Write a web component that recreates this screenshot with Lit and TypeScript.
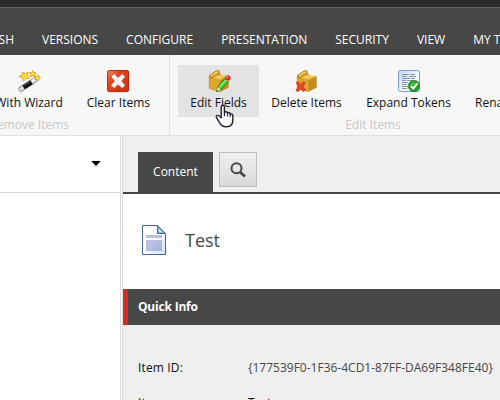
import { LitElement, html, svg, css } from "lit";
import { customElement } from "lit/decorators.js";

const wand = html`<svg viewBox="0 0 24 24" width="24" height="24">
  <path d="M4 20 18 11" stroke="#888" stroke-width="5.2" stroke-linecap="round"/>
  <path d="M4 20 18 11" stroke="#dcdcdc" stroke-width="3.8" stroke-linecap="round"/>
  <path d="M6.5 18.4 14.5 13.2" stroke="#111" stroke-width="4.6"/>
  <path d="M6.2 17 13.5 12.4" stroke="#666" stroke-width="1"/>
  <path d="M17.5 10.2 15 12" stroke="#fff" stroke-width="2"/>
  <g fill="#fbdc3c" stroke="#c99a10" stroke-width=".7" stroke-linejoin="round">
    <path d="M5 3.2 8 4.6 11.2 3.2 10.5 6.6 12.3 9.4 9 9.6 6.4 12.2 5.3 8.8 2.2 7.4 5 6z"/>
    <path d="M15.5 1.6 16.5 3.6 19 3.7 17.4 5.5 17.8 7.8 15.6 6.9 13.3 7.9 13.7 5.4 12.3 3.8 14.6 3.5z"/>
    <path d="M21.2 5.8 22 7.6 23.7 8.6 22.1 9.7 21.8 11.6 20 10.4 17.9 10.8 18.7 8.8 17.9 7.1 20 7.2z"/>
  </g></svg>`;

const clear = html`<svg viewBox="0 0 24 24" width="24" height="24">
  <defs><linearGradient id="r" x2="1" y2="1"><stop stop-color="#f48b68"/><stop offset=".35" stop-color="#e8401c"/><stop offset="1" stop-color="#d42a04"/></linearGradient></defs>
  <rect x="1.6" y="1.6" width="21" height="21" rx="1.5" fill="url(#r)" stroke="#b02408"/>
  <path d="M8.2 4.6 12.1 8.4 16.2 4.6 19.4 7.8 15.8 12 19.4 16.2 16.2 19.5 12.1 15.8 8 19.5 4.8 16.2 8.4 12 4.8 7.8z" fill="#f4f1f0" stroke="#a93a20" stroke-width=".6"/>
</svg>`;

const box = svg`
  <path d="M2.3 8.2 13 11.2 13.2 22.5 4 20.2Q2.2 19.6 2.2 18z" fill="#e2a62a"/>
  <path d="M13 11.2 21.3 7.4V18.4L13.2 22.6z" fill="#c48c1a"/>
  <path d="M2.3 8.2 11.2 4.6 21.3 7.4 13 11.2z" fill="#f1c95b"/>
  <path d="M2.6 6.2 9.6 1.6 12 2 13 6 11.3 5.2 4.5 9.2 2.4 8.4z" fill="#dba32c" stroke="#a66f0e" stroke-width=".7"/>
  <path d="M4 6.6 10.5 2.7" stroke="#f9df8e" stroke-width="1.1"/>
  <path d="M2.3 8.2 13 11.2 21.3 7.4V18.4L13.2 22.6 4 20.2Q2.2 19.6 2.2 18z" fill="none" stroke="#ba8118" stroke-width=".6"/>`;

const editBox = html`<svg viewBox="0 0 24 24" width="24" height="24">${box}
  <path d="M9.6 22.6 10.8 17.4 18.5 8.9 22 12.2 14.1 20.7z" fill="#42c92f" stroke="#16831a" stroke-width=".8"/>
  <path d="M12.4 18.4 19.6 10.4" stroke="#a2f288" stroke-width="1.3"/>
  <path d="M9.6 22.6 10.7 18.3 13.7 21z" fill="#eee2ce"/><path d="M9.6 22.6 10 20.9 11.3 22.1z" fill="#222"/>
  <path d="M17.6 9.6 19 8.2 22.3 11.2 20.9 12.8z" fill="#d5dbe2"/>
  <circle cx="20.8" cy="9" r="2.8" fill="#df3026"/><circle cx="20.2" cy="8" r="1" fill="#f59586"/></svg>`;

const deleteBox = html`<svg viewBox="0 0 24 24" width="24" height="24">${box}
  <path d="M1.2 13.6 3.3 12.8 5.7 15.4 8.3 12.8 10.2 13.8 8 17.5 10.3 21 8.2 22.7 5.6 19.8 3 22.7 .9 21.3 3.4 17.5z" fill="#ed4426" stroke="#b92a12" stroke-width=".7"/></svg>`;

const tokens = html`<svg viewBox="0 0 24 24" width="24" height="24">
  <defs><linearGradient id="t" x2="1" y2="1"><stop stop-color="#bcd8fa"/><stop offset=".6" stop-color="#f5f9fe"/><stop offset="1" stop-color="#d5e5f8"/></linearGradient></defs>
  <rect x="1.5" y="1.5" width="21" height="21" rx="2" fill="url(#t)" stroke="#7c9cd4"/>
  <path d="M5 5.5h7m1 0h5M5 7.5h5m2 0h7M5 9.5h8m1 0h4M5 11.5h4m1 0h5M5 13.5h6M5 15.5h5M5 17.5h6M5 19.5h5" stroke="#8b939e"/>
  <circle cx="17" cy="17" r="5.7" fill="#219c1e" stroke="#10780f" stroke-width=".6"/>
  <path d="M12.5 15.5a5 4 0 0 1 9 0q-4 2-9 0" fill="#66c85c" opacity=".6"/>
  <path d="M13.8 17 16.2 19.5 20.7 14.4" fill="none" stroke="#fff" stroke-width="2"/></svg>`;

const blank = html`<svg viewBox="0 0 24 24" width="24" height="24"></svg>`;

const pageIcon = html`<svg viewBox="0 0 24 30" width="24" height="30">
  <defs><linearGradient id="d" x2="1" y2="1"><stop stop-color="#fff"/><stop offset=".5" stop-color="#fbfdff"/><stop offset="1" stop-color="#cce2f8"/></linearGradient>
  <linearGradient id="b" x2="1" y2="1"><stop stop-color="#aebfe2"/><stop offset=".35" stop-color="#bfc0df"/><stop offset="1" stop-color="#9fb5df"/></linearGradient></defs>
  <path d="M.5.5H15.5L23.5 8.5V29.5H.5z" fill="url(#d)" stroke="#46659b"/>
  <path d="M15.5.8V8.5H23.2z" fill="#8bbbe0" stroke="#46659b"/><path d="M17 4V7H20z" fill="#d9effb"/>
  <path d="M4 10h16v3H4zM4 15h16v11H4z" fill="url(#b)"/></svg>`;

const hand = html`<svg viewBox="0 0 19 24" width="19" height="24">
  <path d="M6.2 14V3.1Q6.3 1.3 7.8 1.3T9.4 3.1V8.2Q11.7 6.9 12.5 8.9 14.6 8 15.3 10 17.8 9.5 17.8 12.1V16.5Q17.6 22.7 11.2 22.7 7 22.7 5 19.4L1.5 13.7Q.8 12 2.4 11.4 4 11.1 6.2 14" fill="#fff" stroke="#20202c" stroke-width="1.4" stroke-linejoin="round"/>
  <path d="M9.4 8v4.2M12.5 8.9v3.6M15.3 10v3" stroke="#20202c" stroke-width="1.2"/></svg>`;

@customElement("app-root")
class AppRoot extends LitElement {
  static styles = css`
    :host { display: flex; flex-direction: column; width: 500px; height: 400px; overflow: hidden; position: relative; background: #fff; color: #111; font: 12px/16px "Open Sans", sans-serif; white-space: nowrap; }
    * { box-sizing: border-box; }
    svg { display: block; flex: none; }
    .top { height: 8px; flex: none; background: #2b2b2b; border-bottom: 1px solid #626262; }
    .nav { height: 47px; flex: none; background: #474747; color: #fff; display: flex; gap: 28px; padding: 23px 0 0; line-height: 18px; }
    .nav span { flex: none; }
    .nav .cut { width: 14px; display: flex; justify-content: flex-end; }
    .ribbon { height: 81px; flex: none; display: flex; background: #f7f7f7; border-bottom: 1px solid #e0e0e0; }
    .group { flex: none; padding: 10px 8px 0; display: flex; flex-direction: column; overflow: hidden; }
    .first { width: 170px; padding-right: 7px; border-right: 1px solid #e0e0e0; }
    .first .row { justify-content: flex-end; }
    .second { width: 406px; }
    .row { display: flex; }
    .cmd { flex: none; height: 52px; padding: 4px 12px 0; display: flex; flex-direction: column; align-items: center; gap: 2px; }
    .second .cmd:nth-child(1) { width: 81px; }
    .second .cmd:nth-child(2) { width: 95px; }
    .second .cmd:nth-child(3) { width: 109px; }
    .hot { background: #e3e3e3; }
    .caption { color: #c8c8c8; text-align: center; line-height: 16px; }
    .first .caption { padding-right: 93px; display: flex; justify-content: flex-end; }
    .body { flex: 1; min-height: 0; display: flex; }
    .tree { width: 121px; flex: none; border-right: 1px solid #dcdcdc; }
    .search { height: 57px; border-bottom: 1px solid #d5d5d5; display: flex; justify-content: flex-end; padding: 25px 19px 0 0; }
    .main { flex: 1; min-width: 0; border-left: 1px solid #dcdcdc; margin-left: 1px; display: flex; flex-direction: column; }
    .tabs { height: 58px; flex: none; background: #efefef; border-bottom: 2px solid #474747; display: flex; gap: 6px; padding: 16px 0 0 15px; }
    .tab { width: 75px; background: #474747; color: #fff; text-align: center; line-height: 40px; }
    .find { width: 38px; height: 35px; border: 1px solid #bdbdbd; background: linear-gradient(#f0f0f0, #d9d9d9); display: flex; align-items: center; justify-content: center; }
    .title { height: 95px; flex: none; padding: 31px 0 0 19px; display: flex; gap: 19px; font-size: 18px; line-height: 31px; color: #474747; }
    .section { height: 36px; flex: none; background: #474747; border-left: 5px solid #dc291e; color: #fff; font-weight: 700; line-height: 36px; padding-left: 10px; letter-spacing: -.2px; }
    .info { flex: 1; min-height: 0; overflow: hidden; background: #efefef; padding: 35px 0 0 15px; display: grid; grid-template-columns: 110px 1fr; grid-auto-rows: 17px; row-gap: 18px; align-content: start; }
    .label { letter-spacing: .15px; }
    .value { color: #474747; }
    .hand { position: absolute; left: 215px; top: 104px; }
  `;
  cmd(icon: unknown, label: string, hot = false) {
    return html`<div class="cmd ${hot ? "hot" : ""}">${icon}<span>${label}</span></div>`;
  }
  render() {
    return html`
      <div class="top"></div>
      <nav class="nav"><span class="cut"><span>PUBLISH</span></span>${["VERSIONS", "CONFIGURE", "PRESENTATION", "SECURITY", "VIEW", "MY TOOLBAR"].map((t) => html`<span>${t}</span>`)}</nav>
      <div class="ribbon">
        <div class="group first">
          <div class="row">${this.cmd(wand, "With Wizard")}${this.cmd(clear, "Clear Items")}</div>
          <div class="caption"><span>Remove Items</span></div>
        </div>
        <div class="group second">
          <div class="row">${this.cmd(editBox, "Edit Fields", true)}${this.cmd(deleteBox, "Delete Items")}${this.cmd(tokens, "Expand Tokens")}${this.cmd(blank, "Rename Items")}</div>
          <div class="caption">Edit Items</div>
        </div>
      </div>
      <div class="body">
        <div class="tree"><div class="search"><svg width="10" height="5" viewBox="0 0 10 5"><path d="M.2 0h9.6L5 5z"/></svg></div></div>
        <div class="main">
          <div class="tabs"><div class="tab">Content</div><div class="find"><svg width="18" height="18" viewBox="0 0 18 18" fill="none" stroke="#474747"><circle cx="7.5" cy="7.3" r="5" stroke-width="2"/><path d="M11 11 16 15.5" stroke-width="2.8"/></svg></div></div>
          <div class="title">${pageIcon}<span>Test</span></div>
          <div class="section">Quick Info</div>
          <div class="info"><span class="label">Item ID:</span><span class="value">{177539F0-1F36-4CD1-87FF-DA69F348FE40}</span><span class="label">Item name:</span><span>Test</span></div>
        </div>
      </div>
      <div class="hand">${hand}</div>`;
  }
}
